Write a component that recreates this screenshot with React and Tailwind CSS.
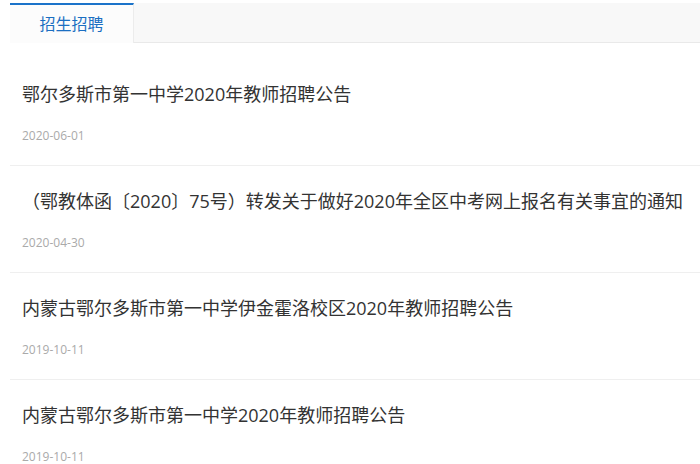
const items = [
  { title: '鄂尔多斯市第一中学2020年教师招聘公告', date: '2020-06-01' },
  { title: '（鄂教体函〔2020〕75号）转发关于做好2020年全区中考网上报名有关事宜的通知', date: '2020-04-30' },
  { title: '内蒙古鄂尔多斯市第一中学伊金霍洛校区2020年教师招聘公告', date: '2019-10-11' },
  { title: '内蒙古鄂尔多斯市第一中学2020年教师招聘公告', date: '2019-10-11' },
];

export default function App() {
  return (
    <div
      className="w-[700px] h-[464px] overflow-hidden bg-white pl-[10px] pt-[3px]"
      style={{ fontFamily: '"Open Sans", "Noto Sans CJK SC", sans-serif' }}
    >
      {/* tab header */}
      <div className="flex h-[40px] bg-[#f8f8f8] border-b border-[#e9e9e9]">
        <div className="w-[124px] h-[40px] bg-[#fcfcfc] border-t-2 border-[#1b73c9] border-r border-r-[#ececec] flex items-center justify-center text-[16px] text-[#1b6fc2]">
          招生招聘
        </div>
      </div>

      {/* list */}
      <div className="pt-[16px]">
        {items.map((it, i) => (
          <div key={i} className="px-3 pt-[20px] pb-[19px] border-b border-[#efefef]">
            <div className="text-[18px] leading-[30px] text-[#333] whitespace-nowrap">{it.title}</div>
            <div className="mt-[17px] text-[12px] leading-[20px] text-[#aaa]">{it.date}</div>
          </div>
        ))}
      </div>
    </div>
  );
}
